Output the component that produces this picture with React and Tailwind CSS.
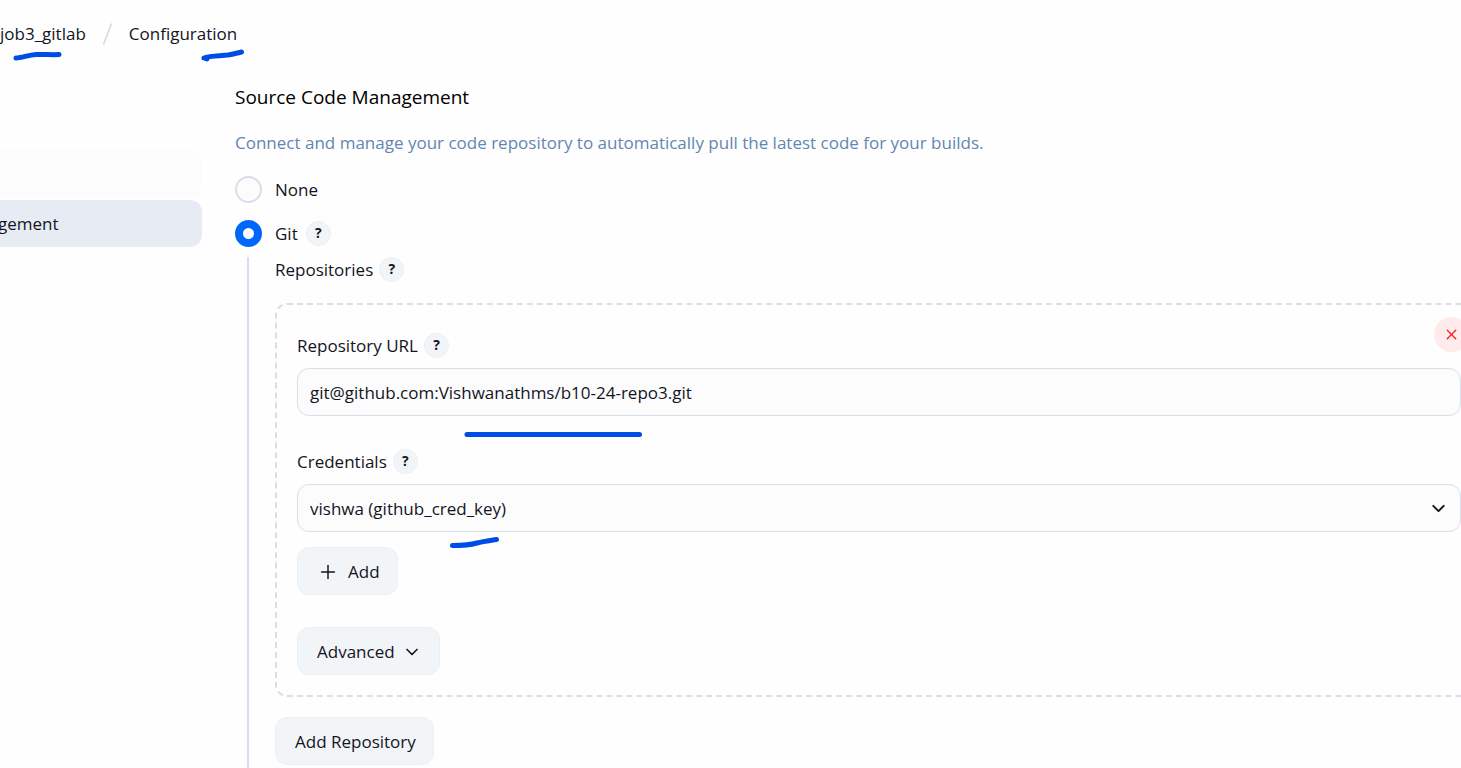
import { ChevronDown, Plus, X } from "lucide-react";

function Help({ topic }) {
  return (
    <button
      type="button"
      aria-label={`Help for ${topic}`}
      className="flex size-[25px] shrink-0 items-center justify-center rounded-full border border-[#ebf0f4] bg-[#f1f5f8] pb-0.5 text-sm leading-none font-bold"
    >
      ?
    </button>
  );
}

function FieldLabel({ htmlFor, children }) {
  return (
    <div className="flex h-[25px] items-center gap-1.5">
      <label htmlFor={htmlFor}>{children}</label>
      <Help topic={children} />
    </div>
  );
}

function Radio({ id, label, help, defaultChecked }) {
  return (
    <div className="flex h-[27px] items-center">
      <input
        id={id}
        type="radio"
        name="scm"
        defaultChecked={defaultChecked}
        className="size-[27px] shrink-0 appearance-none rounded-full border-2 border-[#d9deea] bg-[#fcfcfd] checked:border-8 checked:border-[#0068f8] checked:bg-white"
      />
      <label htmlFor={id} className="mr-2 ml-[13px]">
        {label}
      </label>
      {help && <Help topic={label} />}
    </div>
  );
}

const button =
  "flex h-12 w-fit items-center rounded-xl border border-[#ebf0f4] bg-[#f2f5f8] pt-0.5 pr-[17px] pl-[19px]";
const field =
  "h-12 w-full appearance-none rounded-xl border border-[#d8dfea] bg-[#fcfcfd] px-3 outline-none";

function Annotations() {
  return (
    <svg
      aria-hidden="true"
      className="pointer-events-none absolute top-0 left-0"
      width="700"
      height="560"
      fill="none"
      stroke="#004de6"
      strokeWidth="5"
      strokeLinecap="round"
      strokeLinejoin="round"
    >
      <path d="M16 58 C22 58 28 55 36 54.5 C44 54 50 55 59 54.5" />
      <path d="M207 59 L204 58 C210 55.500 220 56 228 55 C234 54 237 53 241.500 52" />
      <path d="M467 434.500 H639.500" />
      <path d="M452.500 545.500 C461 545.500 468 545.500 477 543 C484 541 490 540.500 496.500 539.500" />
    </svg>
  );
}

export default function App() {
  return (
    <div className="relative flex min-h-screen flex-col overflow-hidden bg-[#fefefe] font-['Open_Sans','Noto_Sans',sans-serif] text-[17px] leading-6 text-[#14141f]">
      <nav aria-label="Breadcrumb" className="flex h-[68px] items-center">
        <a href="#job">job3_gitlab</a>
        <svg
          aria-hidden="true"
          className="mx-4"
          width="11"
          height="24"
          stroke="#cfd8e5"
          strokeWidth="1.5"
        >
          <path d="M1.500 22.500 L9.500 1.500" />
        </svg>
        <a href="#configuration">Configuration</a>
      </nav>

      <div className="flex flex-1">
        <aside className="flex w-[202px] shrink-0 flex-col gap-[3px] pt-[82px]">
          <div className="h-[47px] rounded-r-xl bg-[#fcfcfd]" />
          <a
            href="#management"
            className="-ml-0.5 flex h-[47px] items-center rounded-r-xl bg-[#e7ebf3]"
          >
            gement
          </a>
        </aside>

        <main className="flex min-w-0 flex-1 flex-col pt-[14px] pl-[33px]">
          <h1 className="text-[19px] leading-[30px] text-black">
            Source Code Management
          </h1>
          <p className="mt-4 leading-[30px] text-[#6486b0]">
            Connect and manage your code repository to automatically pull the
            latest code for your builds.
          </p>

          <div className="mt-[18px] flex flex-col gap-[17px]">
            <Radio id="scm-none" label="None" />
            <Radio id="scm-git" label="Git" help defaultChecked />
          </div>

          <section className="mt-[10px] ml-3 flex-1 border-l-2 border-[#d9deea] pl-[26px]">
            <div className="flex h-[25px] items-center gap-1.5">
              <h2>Repositories</h2>
              <Help topic="Repositories" />
            </div>

            <div className="relative mt-[21px] -mr-[22px] rounded-xl border-2 border-dashed border-[#d7e0ea] px-5 pt-7 pb-5">
              <button
                type="button"
                aria-label="Remove repository"
                className="absolute top-3 right-3 flex size-[35px] items-center justify-center rounded-full bg-[#ffebeb] text-[#f02020]"
              >
                <X size={17} strokeWidth={1.8} />
              </button>

              <FieldLabel htmlFor="repo-url">Repository URL</FieldLabel>
              <input
                id="repo-url"
                type="text"
                defaultValue="git@github.com:Vishwanathms/b10-24-repo3.git"
                className={`mt-[10px] block ${field}`}
              />

              <div className="mt-[33px]">
                <FieldLabel htmlFor="credentials">Credentials</FieldLabel>
              </div>
              <div className="mt-[10px] grid items-center">
                <select
                  id="credentials"
                  className={`col-start-1 row-start-1 pt-0.5 ${field}`}
                >
                  <option>vishwa (github_cred_key)</option>
                </select>
                <ChevronDown
                  size={21}
                  strokeWidth={2.2}
                  className="pointer-events-none col-start-1 row-start-1 mr-3 justify-self-end"
                />
              </div>

              <button type="button" className={`mt-[15px] gap-[9px] ${button}`}>
                <Plus size={22} strokeWidth={1.6} />
                Add
              </button>
              <button type="button" className={`mt-8 gap-[7px] ${button}`}>
                Advanced
                <ChevronDown size={20} strokeWidth={2} />
              </button>
            </div>

            <button type="button" className={`mt-5 ${button}`}>
              Add Repository
            </button>
          </section>
        </main>
      </div>
      <Annotations />
    </div>
  );
}
